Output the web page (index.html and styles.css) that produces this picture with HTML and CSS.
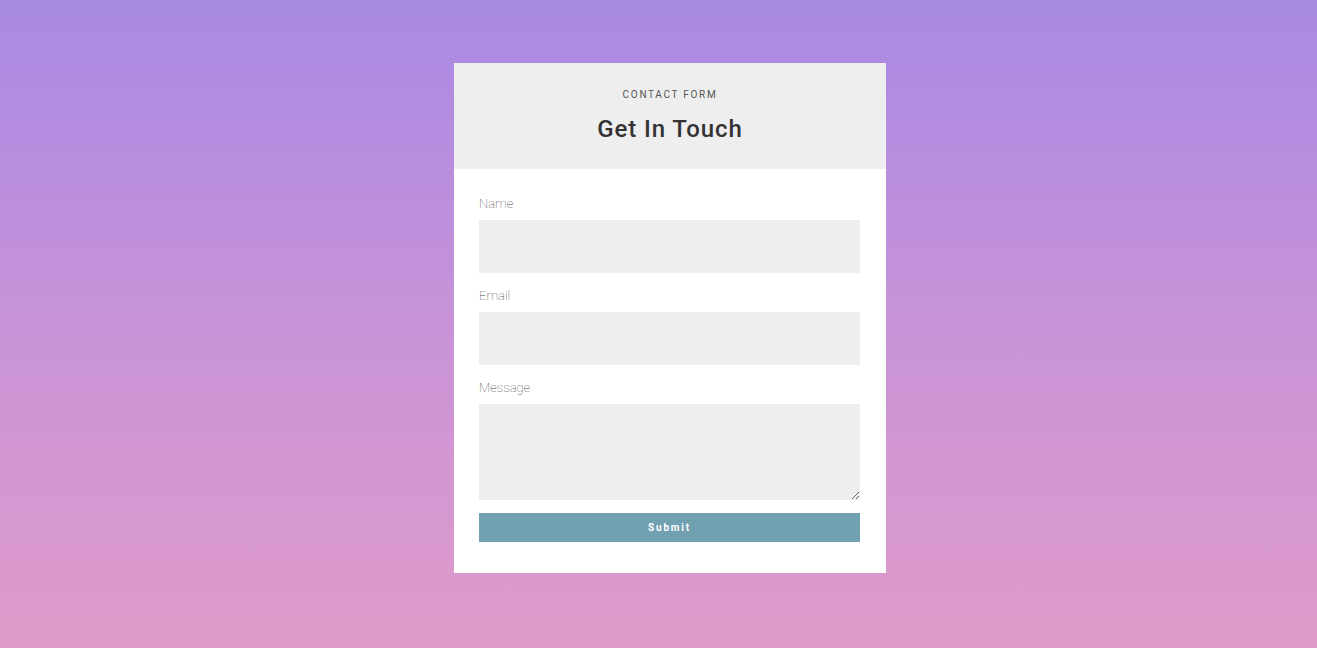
FILE: index.html
```html
<!DOCTYPE html>
<html lang="en">
<head>
<meta charset="utf-8">
<title>Contact Form</title>
<link rel="stylesheet" href="styles.css">
</head>
<body>
<main class="page">
  <section class="card">
    <header class="card-head">
      <p class="eyebrow">CONTACT FORM</p>
      <h1 class="title">Get In Touch</h1>
    </header>
    <form class="form">
      <label class="label" for="name">Name</label>
      <input class="field" id="name" type="text">
      <label class="label" for="email">Email</label>
      <input class="field" id="email" type="email">
      <label class="label" for="msg">Message</label>
      <textarea class="field area" id="msg"></textarea>
      <button class="submit" type="button">Submit</button>
    </form>
  </section>
</main>
</body>
</html>
```

FILE: styles.css
```css
html, body {
  margin: 0;
  padding: 0;
}
body {
  height: 648px;
  font-family: Roboto, "Liberation Sans", sans-serif;
  background: linear-gradient(180deg, #a88ae3 0%, #b88ddf 25%, #c893d7 50%, #d497d1 75%, #de9bc9 100%);
}
.page {
  display: flex;
  justify-content: center;
  padding: 63px 0 0 23px;
}
.card {
  width: 432px;
  background: #fff;
}
.card-head {
  background: #eeeeee;
  height: 106px;
  box-sizing: border-box;
  padding-top: 26px;
  text-align: center;
}
.eyebrow {
  margin: 0;
  font-size: 10px;
  line-height: 12px;
  letter-spacing: 1.7px;
  color: #555;
  font-weight: 400;
}
.title {
  margin: 13px 0 0;
  font-size: 24px;
  line-height: 30px;
  font-weight: 500;
  color: #333;
  letter-spacing: 0.9px;
}
.form {
  display: flex;
  flex-direction: column;
  padding: 26px 26px 31px 25px;
}
.label {
  font-size: 13px;
  line-height: 16px;
  font-weight: 100;
  color: #444;
  padding-top: 1px;
  margin-bottom: 8px;
}
.field {
  display: block;
  width: 100%;
  box-sizing: border-box;
  border: none;
  background: #eeeeee;
  height: 53px;
  margin: 0 0 14px;
  padding: 8px 10px;
  font-family: inherit;
  font-size: 13px;
  outline: none;
}
.area {
  height: 96px;
  resize: vertical;
  margin-bottom: 13px;
}
.submit {
  height: 29px;
  border: none;
  background: #71a0b0;
  color: #fff;
  font-family: Roboto, "Liberation Sans", sans-serif;
  font-weight: 700;
  font-size: 10px;
  letter-spacing: 1.8px;
  padding: 0;
  cursor: pointer;
}
```
